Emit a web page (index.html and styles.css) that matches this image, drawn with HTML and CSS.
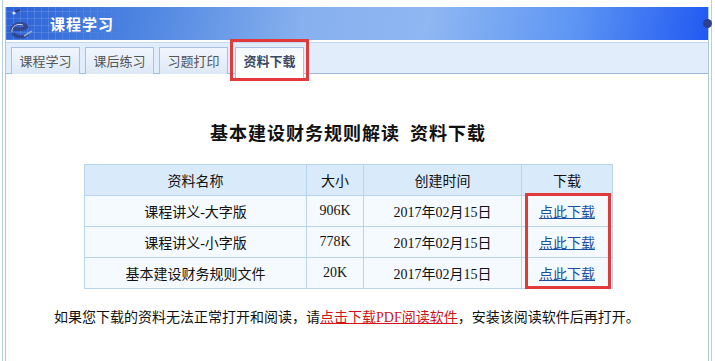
FILE: index.html
```html
<!DOCTYPE html>
<html lang="zh-CN">
<head>
  <meta charset="UTF-8">
  <title>课程学习 - 资料下载</title>
  <link rel="stylesheet" href="styles.css">
</head>
<body>
  <div class="frame">
    <div class="panel">

      <!-- Banner -->
      <div class="banner">
        <div class="grid"></div>
        <svg class="logo" width="30" height="33" viewBox="0 0 30 33">
          <path d="M6 5 L12 3" stroke="#2e3f7c" stroke-width="2"/>
          <circle cx="6" cy="6" r="1.6" fill="#d9e6ff"/>
          <path d="M4 25 C3 18 11 15 17 18 C20 20 18 22 13 22 L6 22" fill="none" stroke="#34468c" stroke-width="3.4"/>
          <path d="M5 26 C8 31 15 31 20 27" fill="none" stroke="#34468c" stroke-width="3.4"/>
          <path d="M4 25 C3 19 10 16 15 18" fill="none" stroke="#c9d6f4" stroke-width="1"/>
          <path d="M16 29 L24 24" stroke="#8ea6d8" stroke-width="2"/>
        </svg>
        <div class="banner-title">课程学习</div>
        <span class="ball"></span>
      </div>

      <!-- Tabs -->
      <div class="tabs">
        <a class="tab">课程学习</a>
        <a class="tab">课后练习</a>
        <a class="tab">习题打印</a>
        <a class="tab active">资料下载</a>
      </div>

      <!-- Content -->
      <div class="content">
        <h2 class="title">基本建设财务规则解读&nbsp; 资料下载</h2>

        <div class="table-wrap">
          <table class="files">
            <tr>
              <th class="c-name">资料名称</th>
              <th class="c-size">大小</th>
              <th class="c-date">创建时间</th>
              <th class="c-dl">下载</th>
            </tr>
            <tr>
              <td>课程讲义-大字版</td>
              <td>906K</td>
              <td>2017年02月15日</td>
              <td><a href="#">点此下载</a></td>
            </tr>
            <tr>
              <td>课程讲义-小字版</td>
              <td>778K</td>
              <td>2017年02月15日</td>
              <td><a href="#">点此下载</a></td>
            </tr>
            <tr>
              <td>基本建设财务规则文件</td>
              <td>20K</td>
              <td>2017年02月15日</td>
              <td><a href="#">点此下载</a></td>
            </tr>
          </table>
          <div class="dl-mark"></div>
        </div>

        <p class="note">如果您下载的资料无法正常打开和阅读，请<a href="#">点击下载PDF阅读软件</a>，安装该阅读软件后再打开。</p>
      </div>

    </div>
  </div>
</body>
</html>
```
FILE: styles.css
```css
body {
  margin: 0;
  padding: 0;
  background: #fff;
  font-family: "Liberation Serif", "Noto Sans CJK SC", serif;
  color: #111;
  font-size: 14px;
}

.frame {
  margin-left: 2px;
  margin-right: 3px;
  height: 361px;
  border-left: 1px solid #b4cfe8;
  border-right: 1px solid #b4cfe8;
  padding: 7px 2px 0 2px;
  box-sizing: border-box;
}

.panel {
  height: 100%;
  border-left: 1px solid #a9c6e4;
  border-right: 1px solid #a9c6e4;
  box-sizing: border-box;
}

/* Banner */
.banner {
  position: relative;
  height: 33px;
  display: flex;
  align-items: center;
  background: linear-gradient(100deg, #2c62d6 0%, #4f86e2 20%, #86b0ee 42%, #8fb7f2 60%, #5f97f4 80%, #2159f2 100%);
}

.grid {
  position: absolute;
  left: 0;
  top: 0;
  width: 120px;
  height: 33px;
  background:
    repeating-linear-gradient(90deg, rgba(255,255,255,0.12) 0 1px, transparent 1px 7px),
    repeating-linear-gradient(0deg, rgba(255,255,255,0.12) 0 1px, transparent 1px 7px);
  -webkit-mask-image: linear-gradient(90deg, #000 40%, transparent);
  mask-image: linear-gradient(90deg, #000 40%, transparent);
}

.logo {
  position: relative;
  flex: none;
  margin-left: 2px;
}

.banner-title {
  position: relative;
  margin-left: 12px;
  color: #fff;
  font-family: "Noto Sans CJK SC", sans-serif;
  font-size: 15px;
  font-weight: bold;
  letter-spacing: 1px;
}

.ball {
  position: absolute;
  right: -4px;
  top: 12px;
  width: 9px;
  height: 9px;
  border-radius: 50%;
  background: #2d3f8e;
}

/* Tabs */
.tabs {
  margin-top: 2px;
  height: 32px;
  background: #e1edfb;
  border-top: 1px solid #c4d8ef;
  border-bottom: 1px solid #9fb9d8;
  display: flex;
  align-items: flex-end;
  gap: 5px;
  padding-left: 5px;
  box-sizing: border-box;
}

.tab {
  width: 69px;
  height: 27px;
  box-sizing: border-box;
  border: 1px solid #a9c1de;
  border-bottom: none;
  background: linear-gradient(#f1f6fd, #dde8f6);
  color: #555;
  font-family: "Noto Sans CJK SC", sans-serif;
  font-size: 13px;
  line-height: 25px;
  text-align: center;
  margin-bottom: -1px;
}

.tab.active {
  position: relative;
  margin-left: 2px;
  height: 31px;
  background: linear-gradient(#f3f7fc, #fff 60%);
  color: #3a4a66;
  font-weight: bold;
  line-height: 26px;
  border-bottom: none;
  margin-bottom: -5px;
}

.tab.active::after {
  content: "";
  position: absolute;
  left: -6px;
  right: -6px;
  top: -9px;
  bottom: -3px;
  border: 3px solid #e23a3a;
}

/* Content */
.content {
  padding-top: 46px;
}

.title {
  margin: 0;
  text-align: center;
  font-family: "Noto Sans CJK SC", sans-serif;
  font-size: 18px;
  font-weight: bold;
  line-height: 24px;
  letter-spacing: 1px;
  color: #111;
  padding-right: 18px;
}

.table-wrap {
  position: relative;
  width: 529px;
  margin: 20px 0 0 78px;
}

.files {
  width: 529px;
  border-collapse: collapse;
  background: #f4faff;
}

.files th,
.files td {
  border: 1px solid #b7d5ee;
  text-align: center;
  font-weight: normal;
  height: 30px;
  padding: 0;
  font-size: 14px;
}

.files th {
  background: #d9ebfa;
}

.c-name { width: 221px; }
.c-size { width: 56px; }
.c-date { width: 157px; }

.files a {
  color: #1b4fa6;
  text-decoration: underline;
}

.dl-mark {
  position: absolute;
  left: 441px;
  top: 29px;
  width: 86px;
  height: 96px;
  box-sizing: border-box;
  border: 3px solid #e23a3a;
}

.note {
  margin: 17px 0 0 48px;
  font-size: 14px;
}

.note a {
  color: #d0141a;
  text-decoration: underline;
}
```
